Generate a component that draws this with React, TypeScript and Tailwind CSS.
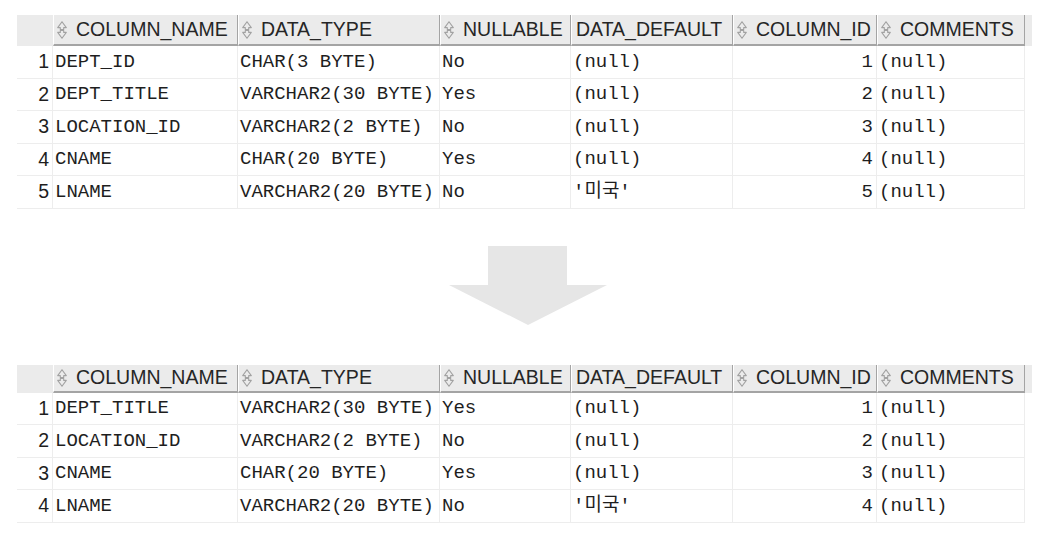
const cols = [
  { key: 'name', label: 'COLUMN_NAME', w: 'w-[185px]', sort: true, right: false },
  { key: 'type', label: 'DATA_TYPE', w: 'w-[202px]', sort: true, right: false },
  { key: 'nullable', label: 'NULLABLE', w: 'w-[131px]', sort: true, right: false },
  { key: 'def', label: 'DATA_DEFAULT', w: 'w-[162px]', sort: false, right: false },
  { key: 'id', label: 'COLUMN_ID', w: 'w-[144px]', sort: true, right: true },
  { key: 'comments', label: 'COMMENTS', w: 'w-[148px]', sort: true, right: false }
] as const

type Row = { name: string; type: string; nullable: string; def: string; id: string; comments: string }

const before: Row[] = [
  { name: 'DEPT_ID', type: 'CHAR(3 BYTE)', nullable: 'No', def: '(null)', id: '1', comments: '(null)' },
  { name: 'DEPT_TITLE', type: 'VARCHAR2(30 BYTE)', nullable: 'Yes', def: '(null)', id: '2', comments: '(null)' },
  { name: 'LOCATION_ID', type: 'VARCHAR2(2 BYTE)', nullable: 'No', def: '(null)', id: '3', comments: '(null)' },
  { name: 'CNAME', type: 'CHAR(20 BYTE)', nullable: 'Yes', def: '(null)', id: '4', comments: '(null)' },
  { name: 'LNAME', type: 'VARCHAR2(20 BYTE)', nullable: 'No', def: "'미국'", id: '5', comments: '(null)' }
]

const after: Row[] = before.slice(1).map((r, i) => ({ ...r, id: String(i + 1) }))

function SortIcon() {
  return (
    <svg width="10" height="18" viewBox="0 0 10 18" className="mr-[9px] shrink-0">
      <path
        d="M5 0.7 L9.3 6.6 H6.7 V8.6 H3.3 V6.6 H0.7 Z M5 17.3 L9.3 11.4 H6.7 V9.4 H3.3 V11.4 H0.7 Z"
        fill="none"
        stroke="#a2a2a2"
        strokeWidth="1.1"
        strokeLinejoin="round"
      />
    </svg>
  )
}

function Grid({ rows, headerH }: { rows: Row[]; headerH: string }) {
  return (
    <div className="ml-[17px]">
      <div className={`flex bg-[#ebebeb] w-[1015px] ${headerH} font-[family-name:'Liberation_Sans',Arial,sans-serif] text-[19.5px] text-[#262626]`}>
        <div className="w-[36px]" />
        {cols.map((c) => (
          <div
            key={c.key}
            className={`${c.w} flex items-center border-b-2 border-r border-[#a4a4a4] border-l border-l-white whitespace-nowrap overflow-hidden ${
              c.sort ? 'pl-[3px]' : 'pl-[4px]'
            }`}
          >
            {c.sort && <SortIcon />}
            <span>{c.label}</span>
          </div>
        ))}
      </div>
      <div className="w-[1008px] text-[#1e1e1e]">
        {rows.map((r, i) => (
          <div key={i} className="flex h-[32.5px] border-b border-[#ededed]">
            <div className="w-[36px] flex items-center justify-end pr-[3px] border-r border-[#ededed] font-[family-name:'Liberation_Sans',Arial,sans-serif] text-[19.5px]">
              {i + 1}
            </div>
            {cols.map((c) => (
              <div
                key={c.key}
                className={`${c.w} flex items-center border-r border-[#ededed] whitespace-nowrap font-[family-name:'Liberation_Mono','Noto_Sans_CJK_KR',monospace] text-[19px] ${
                  c.right ? 'justify-end pr-[3px]' : 'pl-[2px]'
                }`}
              >
                {r[c.key]}
              </div>
            ))}
          </div>
        ))}
      </div>
    </div>
  )
}

export default function App() {
  return (
    <div className="bg-white w-[1039px] h-[544px] pt-[15px] overflow-hidden">
      <Grid rows={before} headerH="h-[31px]" />
      <div className="flex justify-center pl-[16px] mt-[37px] mb-[40px]">
        <svg width="158" height="79" viewBox="0 0 158 79">
          <path d="M39 0 H118 V39 H158 L79 79 L0 39 H39 Z" fill="#e6e6e6" />
        </svg>
      </div>
      <Grid rows={after} headerH="h-[28px]" />
    </div>
  )
}
